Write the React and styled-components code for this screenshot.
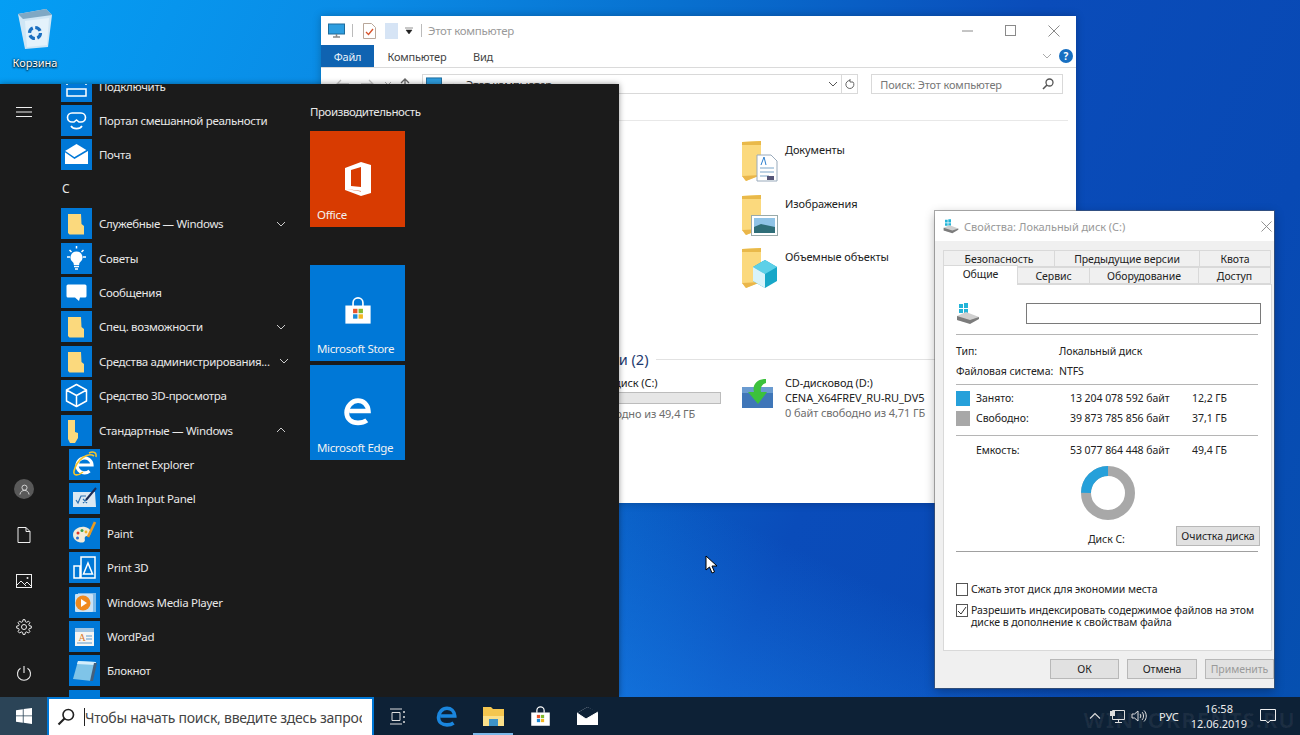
import React from 'react';
import styled, { createGlobalStyle } from 'styled-components';

const Global = createGlobalStyle`
  html, body { margin: 0; padding: 0; width: 1300px; height: 735px; overflow: hidden; }
  body { font-family: "Noto Sans", "Open Sans", "Liberation Sans", sans-serif; font-size: 11.5px; }
  * { box-sizing: border-box; }
  svg { flex: none; }
`;

const Screen = styled.div`
  position: relative; width: 1300px; height: 735px; overflow: hidden;
  display: flex; flex-direction: column;
`;
const Desktop = styled.div`
  position: relative; flex: 1;
  background:
    linear-gradient(205deg, transparent 60%, rgba(25,135,240,.55) 78%, rgba(25,135,240,.2) 92%, transparent 100%),
    linear-gradient(115deg, #049ef4 0%, #0a8ce6 22%, #0870cf 42%, #0a4cba 64%, #0849b4 85%, #0650b0 100%);
`;
const DesktopIcon = styled.div`
  position: absolute; left: 5px; top: 7px; width: 60px;
  display: flex; flex-direction: column; align-items: center; gap: 4px;
  color: #fff; font-size: 11px; text-shadow: 0 1px 2px #000, 0 0 2px #000;
`;

/* ---------- Start menu ---------- */
const StartMenu = styled.div`
  position: absolute; left: 0; top: 84px; width: 619px; height: 613px; z-index: 5;
  background: #1b1b1b; color: #e8e8e8; display: flex; box-shadow: 0 0 6px rgba(0,0,0,.4);
`;
const Rail = styled.div`
  width: 48px; flex: none; display: flex; flex-direction: column; align-items: center;
  padding: 23px 0 1px; color: #eee;
`;
const RailBottom = styled.div`
  margin-top: auto; display: flex; flex-direction: column; align-items: center;
`;
const RailItem = styled.div`
  height: 46px; display: flex; align-items: center; justify-content: center;
`;
const Avatar = styled.div`
  width: 20px; height: 20px; border-radius: 50%; background: #595959;
  display: flex; align-items: center; justify-content: center;
`;
const AppList = styled.div`
  width: 241px; flex: none; padding-left: 13px; overflow: hidden; height: 613px;
`;
const AppInner = styled.div`
  margin-top: -15px; display: flex; flex-direction: column;
`;
const AppRow = styled.div`
  height: 34.4px; flex: none; display: flex; align-items: center; gap: 7px;
  padding-left: ${p => (p.$nested ? '8px' : '0')}; white-space: nowrap;
`;
const AppTile = styled.div`
  width: 31px; height: 31px; flex: none; background: #0078d7; display: flex;
  align-items: center; justify-content: center;
`;
const AppName = styled.span`
  flex: 1; line-height: 31px; letter-spacing: -.32px;
`;
const Chevron = styled.span`
  flex: none; width: 15px; margin-right: .5px; display: flex; justify-content: center; color: #ccc;
`;
const GroupLetter = styled.div`
  height: 34.4px; padding-left: 1px; flex: none; font-size: 12px; line-height: 34.4px;
`;
const TileArea = styled.div`
  padding: 19px 0 0 21px; display: flex; flex-direction: column;
`;
const TileTitle = styled.div`
  height: 28px; font-size: 11.5px; line-height: 18px; white-space: nowrap; letter-spacing: -.42px;
`;
const Tile = styled.div`
  position: relative; width: 95px; height: ${p => p.$h || 96}px; margin-bottom: ${p => p.$mb || 0}px;
  background: ${p => p.$bg}; display: flex; flex-direction: column; align-items: center;
  padding-top: ${p => p.$pt || 28}px;
`;
const TileLabel = styled.span`
  position: absolute; left: 7px; bottom: 5px; font-size: 11.5px; line-height: 15px; color: #f2f2f2; white-space: nowrap; letter-spacing: -.35px;
`;

/* ---------- Explorer ---------- */
const Explorer = styled.div`
  position: absolute; left: 321px; top: 16px; width: 755px; height: 487px; background: #fff; color: #333;
  display: flex; flex-direction: column; box-shadow: 0 0 8px rgba(0,0,0,.25);
`;
const ExTitle = styled.div`
  height: 29px; flex: none; display: flex; align-items: center; padding-left: 7px;
`;
const QuickSep = styled.span`
  width: 1px; height: 13px; background: ${p => (p.$clear ? 'transparent' : '#bbb')};
  margin: 0 ${p => p.$r ?? 10}px 0 ${p => p.$l ?? 7}px;
`;
const ExTitleText = styled.span` color: #9a9a9a; font-size: 11.5px; letter-spacing: -.3px; margin-left: -3px; `;
const WinButtons = styled.div`
  margin-left: auto; display: flex; align-items: center; gap: 32px; padding-right: 16px; color: #8a8a8a;
`;
const Ribbon = styled.div`
  height: 23px; flex: none; display: flex; align-items: stretch; border-bottom: 1px solid #dadada;
`;
const RibbonTab = styled.div`
  width: ${p => p.$w}px; display: flex; align-items: center; justify-content: center; font-size: 11px; letter-spacing: -.2px;
  color: ${p => (p.$active ? '#eaf3fb' : '#444')}; background: ${p => (p.$active ? '#0f63b1' : 'transparent')};
`;
const RibbonEnd = styled.div`
  margin-left: auto; display: flex; align-items: center; gap: 7px; padding-right: 3px; color: #aaa;
`;
const HelpDot = styled.span`
  width: 14px; height: 14px; border-radius: 50%; background: #176fc1; color: #fff; font-size: 10px; font-weight: 700;
  display: flex; align-items: center; justify-content: center;
`;
const AddressRow = styled.div`
  height: 35px; flex: none; display: flex; align-items: flex-start; padding: 6px 13px 0 10px; position: relative;
`;
const NavArrows = styled.div`
  width: 91px; height: 20px; flex: none; display: flex; align-items: center; color: #bbb;
`;
const AddressBox = styled.div`
  width: 421px; height: 20px; border: 1px solid #d9d9d9; display: flex; align-items: center; padding: 0 3px 0 3px; gap: 4px;
`;
const CrumbArrow = styled.span` color: #888; font-size: 9px; width: 16px; text-align: center; `;
const AddressText = styled.span` flex: 1; letter-spacing: -.3px; `;
const RefreshBox = styled.div`
  width: 16px; height: 20px; border: 1px solid #d9d9d9; border-left: 0; display: flex; align-items: center; justify-content: center; color: #666;
`;
const SearchBox = styled.div`
  margin-left: 13px; width: 192px; height: 20px; border: 1px solid #d9d9d9; padding: 0 8px; display: flex; align-items: center;
  justify-content: space-between; color: #777; font-size: 11px; letter-spacing: -.15px;
`;
const ExBody = styled.div`
  flex: 1; display: flex; flex-direction: column; padding: 17px 8px 0 170px;
`;
const BodyRule = styled.div` height: 1px; background: #e8e8e8; `;
const FolderList = styled.div`
  margin: 19px 0 0 250px; display: flex; flex-direction: column; gap: 13.5px;
`;
const FolderRow = styled.div`
  height: 40px; display: flex; gap: 7px; font-size: 11px; line-height: 20px; color: #222; letter-spacing: -.1px;
`;
const SectionHead = styled.div`
  margin-top: 62px; display: flex; align-items: center; gap: 8px; color: #1e3a6e; font-size: 14.5px; line-height: 20px; white-space: nowrap;
`;
const SectionLine = styled.span` flex: 1; height: 1px; background: #e2e2e2; `;
const Drives = styled.div` margin-top: 6px; display: flex; gap: 20px; `;
const DriveTile = styled.div` width: 230px; display: flex; gap: 7px; `;
const DriveText = styled.div`
  flex: 1; font-size: 11px; line-height: 15px; color: #222; white-space: nowrap; display: flex; flex-direction: column; letter-spacing: -.1px;
`;
const DriveBar = styled.div` height: 12px; border: 1px solid #bcbcbc; background: #e6e6e6; margin: 2px 0 2px; `;
const DriveFree = styled.span` color: #6d6d6d; `;
const CdIconWrap = styled.div` width: 37px; padding-top: 3px; `;
const OverlayBox = styled.div`
  position: relative; width: 37px; height: 42px; flex: none;
  & > svg:nth-child(2) { position: absolute; right: 0; bottom: 0; }
`;

/* ---------- Properties dialog ---------- */
const Dialog = styled.div`
  position: absolute; left: 935px; top: 211px; width: 339px; height: 477px; z-index: 6; background: #f0f0f0;
  color: #222; display: flex; flex-direction: column; box-shadow: 0 0 0 1px rgba(90,90,90,.5), 0 3px 10px rgba(0,0,0,.3); font-size: 10.5px; letter-spacing: -.05px;
`;
const DlgTitle = styled.div`
  height: 30px; flex: none; background: #fff; display: flex; align-items: center; padding: 0 2px 0 8px; gap: 5px;
  color: #999; font-size: 11px;
`;
const DlgClose = styled.span` margin-left: auto; color: #888; display: flex; `;
const TabsWrap = styled.div` margin: 9px 3px 0 8px; display: flex; flex-direction: column; `;
const TabRow = styled.div` display: flex; height: 17px; `;
const Tab = styled.div`
  position: relative; width: ${p => p.$w}px; display: flex; align-items: center; justify-content: center;
  background: ${p => (p.$on ? '#fff' : '#f0f0f0')}; border: 1px solid #d9d9d9; border-bottom: ${p => (p.$on ? '0' : '1px solid #d9d9d9')};
  border-left-width: ${p => (p.$first ? 1 : 0)}px; z-index: ${p => (p.$on ? 2 : 1)};
  ${p => p.$on && 'margin-top:-2px; height:20px; padding-bottom:3px;'}
`;
const Panel = styled.div`
  margin: 0 2px 0 8px; height: 367px; background: #fff; border: 1px solid #d9d9d9; padding: 18px 13px 0 12px;
  display: flex; flex-direction: column;
`;
const NameRow = styled.div` display: flex; align-items: center; justify-content: space-between; height: 21px; `;
const NameInput = styled.div` width: 235px; height: 21px; border: 1px solid #7a7a7a; margin-right: -3px; `;
const Rule = styled.div` height: 1px; flex: none; background: ${p => (p.$dark ? '#a0a0a0' : '#b5b5b5')}; margin-top: ${p => p.$mt}px; margin-bottom: ${p => p.$mb}px; `;
const InfoRow = styled.div` height: 20px; flex: none; display: grid; grid-template-columns: 103px 1fr; align-items: center; white-space: nowrap; `;
const UsageRow = styled.div` height: 20px; flex: none; display: grid; grid-template-columns: 20px 94px 122px 1fr; align-items: center; white-space: nowrap; `;
const Swatch = styled.span` width: 14px; height: 15px; background: ${p => p.$c}; `;
const DonutWrap = styled.div` display: flex; justify-content: center; margin: 6px 0 0 2px; `;
const DiskRow = styled.div` display: flex; align-items: flex-end; padding-left: 132px; margin-top: 6px; `;
const DiskLabel = styled.span` line-height: 14px; `;
const Btn = styled.div`
  width: ${p => p.$w}px; height: 20px; background: #e1e1e1; border: 1px solid #b8b8b8; display: flex; align-items: center; justify-content: center;
  color: ${p => (p.$off ? '#9a9a9a' : '#222')}; white-space: nowrap;
`;
const CleanBtn = styled(Btn)` margin-left: auto; margin-right: -2px; `;
const CheckRow = styled.div` display: flex; gap: 3px; margin-top: ${p => p.$mt}px; line-height: 12px; `;
const Check = styled.span`
  width: 12px; height: 13px; flex: none; border: 1px solid #555; background: #fff; display: flex; align-items: center; justify-content: center;
`;
const DlgFooter = styled.div` display: flex; justify-content: flex-end; gap: 8px; padding: 8px 0 0 0; `;

/* ---------- Taskbar ---------- */
const Taskbar = styled.div`
  position: relative; z-index: 7; height: 38px; flex: none; background: #0d2136; display: flex; align-items: stretch; color: #eee;
`;
const StartBtn = styled.div`
  width: 47px; flex: none; background: #2b4457; display: flex; align-items: center; justify-content: center;
`;
const SearchBar = styled.div`
  width: 327px; flex: none; background: #fff; border: 2px solid #0078d7; border-bottom: 0; display: flex; align-items: center;
  padding: 0 10px 0 8px; color: #444; overflow: hidden; white-space: nowrap;
`;
const Caret = styled.span` width: 1px; height: 18px; background: #222; margin-left: 9px; flex: none; `;
const SearchText = styled.span` font-size: 14px; overflow: hidden; letter-spacing: -.25px; `;
const TaskIcons = styled.div` display: flex; align-items: stretch; margin-left: 7px; `;
const TaskItem = styled.div`
  position: relative; width: ${p => p.$w || 46}px; margin-left: ${p => p.$ml || 0}px; display: flex; align-items: center; justify-content: center;
  ${p => p.$active && `&::after{content:"";position:absolute;left:3px;right:3px;bottom:0;height:2px;background:#7cb8e8;}`}
`;
const Tray = styled.div`
  margin-left: auto; position: relative; display: flex; align-items: center; gap: 5px; padding-right: 24px; color: #ddd;
`;
const TrayUpWrap = styled.span` display: flex; margin-right: 4px; `;
const TrayLang = styled.span` font-size: 11px; margin: 0 7px; color: #eee; `;
const Clock = styled.div` text-align: center; font-size: 11px; line-height: 15px; color: #eee; margin-right: 8px; `;
const Watermark = styled.span`
  position: absolute; right: 4px; top: 7px; font-size: 22px; font-weight: 700; color: rgba(255,255,255,.06); white-space: nowrap; letter-spacing: 1px;
`;
const Cursor = styled.div` position: absolute; left: 705px; top: 555px; z-index: 8; display: flex; `;

/* ---------- Icons ---------- */
const Y = '#fbd97d';
const I = ({ children, s = 31, vb = '0 0 31 31', w, h }) => (
  <svg width={w || s} height={h || s} viewBox={vb} fill="none">{children}</svg>
);
const RecycleBin = () => (
  <I w={40} h={44} vb="0 0 40 44">
    <path d="M3 7 L31 2 L37 8 L33 40 L10 42Z" fill="#cfe6f5" />
    <path d="M3 7 L31 2 L37 8 L8 12Z" fill="#7fa8c4" />
    <path d="M10 14 L34 11 L32 38 L12 40Z" fill="#e4f2fb" />
    <circle cx="20" cy="26" r="5.5" stroke="#1c6fc0" strokeWidth="3.2" strokeDasharray="6 2.5" />
  </I>
);
const PartialConnect = () => (<I><path d="M6 14v-6h6M25 14v-6h-6M6 18h19v7H6z" stroke="#fff" strokeWidth="1.5" /></I>);
const Goggles = () => (<I><path d="M11 8h9a4.500 4.500 0 0 1 0 9h-2l-2.500-2-2.500 2h-2a4.500 4.500 0 0 1 0-9z" stroke="#fff" strokeWidth="1.600" /><path d="M10 21c2 3.500 9 3.500 11 0" stroke="#fff" strokeWidth="1.600" /></I>);
const Mail = ({ flap = '#0078d7' }) => (<I><path d="M4 12 15.500 5 27 12v13H4z" fill="#fff" /><path d="M4 12.500 13.500 19 27 11" stroke={flap} strokeWidth="1.500" /></I>);
const Folder = ({ narrow }) => (<I><path d={narrow ? 'M7 5h7v12l3 1v5l-3 5H9l-2-4z' : 'M7 6h13l.5 10 2.500 2v8.500H8.500L7 25z'} fill={Y} /></I>);
const Bulb = () => (<I><path d="M15.500 8.500a6 6 0 0 1 3.600 10.800c-.8.700-.9 1.600-.9 2.700h-5.400c0-1.100-.1-2-.9-2.700A6 6 0 0 1 15.500 8.500z" fill="#fff" /><path d="M13 23.500h5M14 26h3" stroke="#fff" strokeWidth="1.500" /><path d="M15.500 3v2.500M6 14h3M22 14h3M8.500 7l2 2M22.500 7l-2 2" stroke="#fff" strokeWidth="1.500" /></I>);
const Chat = () => (<I><path d="M7 7.500h17a1.500 1.500 0 0 1 1.500 1.500v10a1.500 1.500 0 0 1-1.500 1.500h-5l-1 3.500-4-3.500H7A1.500 1.500 0 0 1 5.500 19V9A1.500 1.500 0 0 1 7 7.500z" fill="#fff" /></I>);
const Cube = () => (<I><path d="M15.500 4.500 25.500 10v11l-10 5.500-10-5.500V10zM5.500 10l10 5.500 10-5.500M15.500 15.500v11" stroke="#fff" strokeWidth="1.500" strokeLinejoin="round" /></I>);
const IE = () => (<I>
  <path d="M9 16h14a7.500 7.500 0 1 0-2.500 6" stroke="#fff" strokeWidth="3.200" />
  <path d="M25 7C19 3 8 10 5 22c-1 5 4 5 9 1" stroke="#f6c42c" strokeWidth="1.600" />
  <path d="M20 4c4-2 8-1 7 4" stroke="#f6c42c" strokeWidth="1.400" />
</I>);
const MathIcon = () => (<I><path d="M4 9h22l1 15H4z" fill="#dbe8f2" /><path d="M7 17l2 3 3-7h5M14 16l4 4M18 16l-4 4" stroke="#2a6fb0" strokeWidth="1.200" /><path d="M17 17 27 5" stroke="#1a2a55" strokeWidth="2" /></I>);
const PaintI = () => (<I>
  <path d="M4 17c0-6 7-9 12-8 5 .8 7 5 5 8-1.500 2-4 0-5 2-1 2 1 3-1 5-3 2-11-1-11-7z" fill="#f1ead8" />
  <circle cx="9" cy="15" r="1.500" fill="#d9362b" /><circle cx="13" cy="12.500" r="1.500" fill="#3ba14a" /><circle cx="8.500" cy="20" r="1.500" fill="#2b6fd1" /><circle cx="17" cy="14" r="1.400" fill="#f0b323" />
  <path d="M26 4 19 19" stroke="#e89a22" strokeWidth="2.600" />
</I>);
const Print3D = () => (<I><path d="M12 5h14v21H12zM5 14h6v12H5z" stroke="#fff" strokeWidth="1.500" /><path d="M19 11l4.500 11h-9z" stroke="#fff" strokeWidth="1.500" /></I>);
const WMP = () => (<I><rect x="9" y="6" width="18" height="19" fill="#7fbbe9" /><rect x="6" y="7" width="18" height="18" rx="1" fill="#c9e2f5" /><circle cx="14" cy="16" r="7.500" fill="#f08a1d" /><path d="M12 12l6 4-6 4z" fill="#fff" /></I>);
const WordPadI = () => (<I><path d="M6 7h19v18H6z" fill="#f5f5f2" /><path d="M6 7h19v4H6z" fill="#9fc6e6" /><text x="9.500" y="20" fontSize="10" fill="#d97a2b" fontFamily="Liberation Serif, serif">A</text><path d="M17 15h6M17 18h6M8 22h15" stroke="#5b9bd0" /></I>);
const Notepad = () => (<I><path d="M9 6 27 7 23 26 4 24z" fill="#7fc4e8" /><path d="M9 6 27 7 26 10 8 9z" fill="#d4eefc" /><path d="M25 8l-4 18 3 0 4-18z" fill="#44607d" /></I>);
const OfficeLogo = () => (<I w={32} h={36} vb="0 0 32 36"><path fillRule="evenodd" d="M19 1 3 7v22l16 6 10-3V4zM19 6 9 9v16l10 1 0 4.500L4.500 28l14.500 2zm0 0v24" fill="#fff" /></I>);
const Store = ({ s = 31 }) => (<I s={s}>
  <path d="M11 11V8a4.500 4.500 0 0 1 9 0v3" stroke="#fff" strokeWidth="1.500" />
  <path d="M4 10.500h23V27H4z" fill="#fff" />
  <rect x="11" y="13.500" width="4" height="4" fill="#e8552b" /><rect x="16" y="13.500" width="4" height="4" fill="#7fb92b" />
  <rect x="11" y="18.500" width="4" height="4" fill="#1a8ad8" /><rect x="16" y="18.500" width="4" height="4" fill="#f3b61f" />
</I>);
const EdgeLogo = ({ c = '#fff', s = 31 }) => (<I s={s}><path d="M7 15.500h18.500C25 9 20.500 5.500 15.500 5.500 9.500 5.500 4.500 11 4.500 17c0 6.500 5 10 11 10 3.500 0 6.500-1 8.500-2.500" stroke={c} strokeWidth="4.600" /></I>);
const ExFolder = () => (<I w={38} h={42} vb="0 0 38 42"><path d="M1 2l19-1v34L5 41 1 36z" fill={Y} /><path d="M1 2l19-1v4H1z" fill="#e9b94a" /><path d="M1 36l19-1-15 6z" fill="#eab64a" /></I>);
const DocOver = () => (<I w={22} h={28} vb="0 0 22 28"><path d="M1 1h14l6 6v20H1z" fill="#fff" stroke="#9ab" /><path d="M4 14h14M4 18h14M4 22h9" stroke="#7aa5c8" /><path d="M11 22h7v4h-7z" fill="#557" /><path d="M5 11l3-8 2 8" stroke="#2c7fce" /></I>);
const PicOver = () => (<I w={27} h={21} vb="0 0 27 21"><rect x=".5" y=".5" width="26" height="20" fill="#fff" stroke="#9aa" /><rect x="3" y="3" width="21" height="15" fill="#8fc3e6" /><path d="M3 12l7-3 14 3v6H3z" fill="#2f6e78" /></I>);
const CubeOver = () => (<I w={26} h={30} vb="0 0 26 30"><path d="M13 1 25 8v14l-12 7-12-7V8z" fill="#17a7c8" /><path d="M13 1 25 8 13 15 1 8z" fill="#5cd0e8" /><path d="M1 8l12 7v14L1 22z" fill="#d8f3fa" /></I>);
const DocFolder = ({ children }) => (<OverlayBox><ExFolder />{children}</OverlayBox>);
const Drive = () => (<I w={54} h={30} vb="0 0 54 30"><rect x="1" y="3" width="50" height="24" fill="#d8d8d8" /></I>);
const CdIcon = () => (<I w={33} h={31} vb="0 0 33 31">
  <path d="M1 9h31v21H1z" fill="#3f76b8" /><path d="M1 9h31v6H1z" fill="#6a9bd0" />
  <path d="M25 1C16 1 11 7 13 14H7l10 12 9-12h-6c-1-4 1-8 5-9z" fill="#3cc13c" />
</I>);
const DiskIcon = ({ w = 24, h = 22 }) => (<I w={w} h={h} vb="0 0 24 22">
  <path d="M3 1h4v4H3zM8 0h4v5H8zM3 6h4v4H3zM8 6h4v4H8z" fill="#22b4d8" />
  <path d="M1 13 10 9l13 5-9 6-13-3z" fill="#cfcfcf" /><path d="M1 13l13 4 9-3v2l-9 5-13-4z" fill="#7c7c7c" />
</I>);
const Computer = ({ w = 17, h = 16 }) => (<I w={w} h={h} vb="0 0 17 16"><rect x=".5" y="1" width="16" height="10" fill="#2e9ee0" stroke="#1d6b9b" /><path d="M5 14h7M8.500 11v3" stroke="#888" strokeWidth="1.500" /></I>);
const DocCheck = () => (<I w={13} h={16} vb="0 0 13 16"><path d="M.5.5h8l4 4v11H.5z" fill="#fff" stroke="#b9a79a" /><path d="M3 9l2.500 2.500L10 6" stroke="#d8532b" strokeWidth="1.300" /></I>);
const BlankDoc = () => (<I w={13} h={16} vb="0 0 13 16"><rect width="13" height="16" fill="#d6e4f5" /></I>);
const QuickDrop = () => (<I w={8} h={8} vb="0 0 8 8"><path d="M0 1h8M1 3h6l-3 4z" fill="#222" stroke="#222" strokeWidth=".5" /></I>);
const MinIcon = () => (<I s={11} vb="0 0 11 11"><path d="M0 6h11" stroke="currentColor" /></I>);
const MaxIcon = () => (<I s={11} vb="0 0 11 11"><rect x=".5" y=".5" width="10" height="10" stroke="currentColor" /></I>);
const Refresh = () => (<I s={11} vb="0 0 11 11"><path d="M9 3a4 4 0 1 1-3-1.500M6 0v3h3" stroke="#666" /></I>);
const Nav = () => (<I w={90} h={20} vb="0 0 90 20"><path d="M6 10h12M10 6l-4 4 4 4M30 10h12M38 6l4 4-4 4" stroke="#c4c4c4" strokeWidth="1.300" /><path d="M54 8l3 3 3-3" stroke="#aaa" /><path d="M74 16V5M70 9l4-4 4 4" stroke="#666" strokeWidth="1.300" /></I>);
const Down = ({ s = 10, c = 'currentColor', up }) => (<I s={s} vb="0 0 10 10"><path d={up ? 'M1 7l4-4 4 4' : 'M1 3l4 4 4-4'} stroke={c} /></I>);
const XIcon = ({ s = 12 }) => (<I s={s} vb="0 0 12 12"><path d="M.5.5l11 11M11.500.5l-11 11" stroke="currentColor" /></I>);
const Glass = ({ s = 12, c = '#555', sw = 1.300 }) => (<I s={s} vb="0 0 12 12"><circle cx="7.500" cy="4.500" r="3.500" stroke={c} strokeWidth={sw} /><path d="M5 7l-4 4" stroke={c} strokeWidth={sw + .3} /></I>);
const Hamburger = () => (<I w={16} h={10} vb="0 0 16 10"><path d="M0 .5h16M0 5h16M0 9.500h16" stroke="#eee" /></I>);
const Doc = () => (<I w={14} h={16} vb="0 0 14 16"><path d="M1 .5h8l4 4v11H1zM9 .5v4h4" stroke="#eee" /></I>);
const Photo = () => (<I w={16} h={14} vb="0 0 16 14"><rect x=".5" y=".5" width="15" height="13" stroke="#eee" /><path d="M1 11l4-4 5 5M9 10l2-2 4 4" stroke="#eee" /><circle cx="11.500" cy="4" r="1" fill="#eee" /></I>);
const Gear = () => (<I s={16} vb="0 0 16 16"><circle cx="8" cy="8" r="2.500" stroke="#eee" /><path d="M7 .7h2l.4 2 1.300.6 1.800-1.100 1.400 1.400-1.100 1.800.5 1.300 2 .4v2l-2 .4-.5 1.300 1.100 1.800-1.400 1.400-1.800-1.100-1.300.5-.4 2H7l-.4-2-1.300-.5-1.800 1.100-1.400-1.400 1.100-1.800-.5-1.300-2-.4v-2l2-.4.5-1.300-1.100-1.800 1.400-1.400 1.800 1.100 1.300-.6z" stroke="#eee" strokeLinejoin="round" /></I>);
const Power = () => (<I s={16} vb="0 0 16 16"><path d="M8 1v7M4.500 3.300a6.500 6.500 0 1 0 7 0" stroke="#eee" strokeWidth="1.100" /></I>);
const User = () => (<I s={11} vb="0 0 12 12"><circle cx="6" cy="4" r="2.800" stroke="#ddd" /><path d="M1 11.500c.5-3 2.500-4.500 5-4.500s4.500 1.500 5 4.500" stroke="#ddd" /></I>);
const WinLogo = () => (<I s={16} vb="0 0 16 16"><path d="M0 2.200 6.800 1.200v6.300H0zM7.600 1.100 16 0v7.500H7.600zM0 8.300h6.800v6.400L0 13.800zM7.600 8.300H16V16l-8.400-1.200z" fill="#fff" /></I>);
const TaskView = () => (<I w={17} h={17} vb="0 0 17 17"><path d="M1 1h12M1 16h12M3 4.500h8v8H3z" stroke="#ddd" /><path d="M15 3v2M15 8v2M15 13v2" stroke="#ddd" strokeWidth="1.500" /></I>);
const TbFolder = () => (<I w={23} h={22} vb="0 0 23 22"><path d="M1 2h8l2 2h11v17H1z" fill="#f4c64f" /><path d="M1 11h21v10H1z" fill="#fbe08a" /><path d="M7 14h9v7H7z" fill="#3d93c9" /></I>);
const TbMail = () => (<I w={23} h={20} vb="0 0 23 20"><path d="M1 7 11.500 1 22 7v12H1z" fill="#fff" /><path d="M1 7l9 6L22 6 11.500 1z" fill="#0d2136" /><path d="M1 7l9 6L22 6" stroke="#fff" /></I>);
const TrayUp = () => (<I s={12} vb="0 0 12 12"><path d="M1 8.500 6 3.500l5 5" stroke="#ddd" strokeWidth="1.100" /></I>);
const Net = () => (<I w={16} h={15} vb="0 0 16 15"><path d="M2.500 1.500h12v9h-12zM5 13.500h7M8.500 10.500v3" stroke="#ddd" /><rect x="0" y="2" width="5" height="5" fill="#ddd" /></I>);
const Speaker = () => (<I w={16} h={14} vb="0 0 16 14"><path d="M1 5h2.500L7 2v10L3.500 9H1zM9 5c1 1 1 3 0 4M11 3c2 2 2 6 0 8M13 1.500c3 3 3 8 0 11" stroke="#ddd" /></I>);
const Notif = () => (<I w={16} h={15} vb="0 0 16 15"><path d="M.5.5h15v11h-5.500L8 14l-2-2.500H.5z" stroke="#eee" /></I>);
const Arrow = () => (<I w={13} h={19} vb="0 0 13 19"><path d="M1 1v14l3.500-3 2.500 6 2.500-1-2.500-6H12z" fill="#fff" stroke="#000" /></I>);
const Ck = () => (<I s={10} vb="0 0 10 10"><path d="M1 5l3 3 5-7" stroke="#333" /></I>);
const Donut = () => (
  <I s={54} vb="0 0 54 54">
    <circle cx="27" cy="27" r="22" stroke="#a8a8a8" strokeWidth="10" />
    <circle cx="27" cy="27" r="22" stroke="#26a0da" strokeWidth="10" strokeDasharray="34.200 104" transform="rotate(-90 27 27) scale(1 -1) translate(0 -54)" />
  </I>
);

const apps = [
  { n: 'Подключить', i: <PartialConnect /> },
  { n: 'Портал смешанной реальности', i: <Goggles /> },
  { n: 'Почта', i: <Mail /> },
  { letter: 'С' },
  { n: 'Служебные — Windows', i: <Folder />, c: 'd' },
  { n: 'Советы', i: <Bulb /> },
  { n: 'Сообщения', i: <Chat /> },
  { n: 'Спец. возможности', i: <Folder />, c: 'd' },
  { n: 'Средства администрирования...', i: <Folder />, c: 'd' },
  { n: 'Средство 3D-просмотра', i: <Cube /> },
  { n: 'Стандартные — Windows', i: <Folder narrow />, c: 'u' },
  { n: 'Internet Explorer', i: <IE />, sub: 1 },
  { n: 'Math Input Panel', i: <MathIcon />, sub: 1 },
  { n: 'Paint', i: <PaintI />, sub: 1 },
  { n: 'Print 3D', i: <Print3D />, sub: 1 },
  { n: 'Windows Media Player', i: <WMP />, sub: 1 },
  { n: 'WordPad', i: <WordPadI />, sub: 1 },
  { n: 'Блокнот', i: <Notepad />, sub: 1 },
  { n: '', i: null, sub: 1 },
];

export default function App() {
  return (
    <Screen>
      <Global />
      <Desktop>
        <DesktopIcon><RecycleBin /><span>Корзина</span></DesktopIcon>

        <Explorer>
          <ExTitle>
            <Computer /><QuickSep />
            <DocCheck />
            <QuickSep $clear $l={4} $r={4} />
            <BlankDoc />
            <QuickSep $clear $l={3} $r={3} />
            <QuickDrop />
            <QuickSep $l={8} $r={9} />
            <ExTitleText>Этот компьютер</ExTitleText>
            <WinButtons>
              <MinIcon />
              <MaxIcon />
              <XIcon />
            </WinButtons>
          </ExTitle>
          <Ribbon>
            <RibbonTab $active $w={53}>Файл</RibbonTab>
            <RibbonTab $w={86}>Компьютер</RibbonTab>
            <RibbonTab $w={46}>Вид</RibbonTab>
            <RibbonEnd><Down /><HelpDot>?</HelpDot></RibbonEnd>
          </Ribbon>
          <AddressRow>
            <NavArrows><Nav /></NavArrows>
            <AddressBox>
              <Computer w={16} h={15} />
              <CrumbArrow>›</CrumbArrow>
              <AddressText>Этот компьютер</AddressText>
              <Down c="#555" />
            </AddressBox>
            <RefreshBox><Refresh /></RefreshBox>
            <SearchBox>Поиск: Этот компьютер <Glass /></SearchBox>
          </AddressRow>
          <ExBody>
            <BodyRule />
            <FolderList>
              <FolderRow><DocFolder><DocOver /></DocFolder>Документы</FolderRow>
              <FolderRow><DocFolder><PicOver /></DocFolder>Изображения</FolderRow>
              <FolderRow><DocFolder><CubeOver /></DocFolder>Объемные объекты</FolderRow>
            </FolderList>
            <SectionHead>Устройства и диски (2)<SectionLine /></SectionHead>
            <Drives>
              <DriveTile>
                <Drive />
                <DriveText>
                  <span>Локальный диск (C:)</span>
                  <DriveBar />
                  <DriveFree>37,1 ГБ свободно из 49,4 ГБ</DriveFree>
                </DriveText>
              </DriveTile>
              <DriveTile>
                <CdIconWrap><CdIcon /></CdIconWrap>
                <DriveText>
                  <span>CD-дисковод (D:)</span>
                  <span>CENA_X64FREV_RU-RU_DV5</span>
                  <DriveFree>0 байт свободно из 4,71 ГБ</DriveFree>
                </DriveText>
              </DriveTile>
            </Drives>
          </ExBody>
        </Explorer>

        <StartMenu>
          <Rail>
            <Hamburger />
            <RailBottom>
              <RailItem><Avatar><User /></Avatar></RailItem>
              <RailItem><Doc /></RailItem>
              <RailItem><Photo /></RailItem>
              <RailItem><Gear /></RailItem>
              <RailItem><Power /></RailItem>
            </RailBottom>
          </Rail>
          <AppList>
            <AppInner>
              {apps.map((a, k) => a.letter ? (
                <GroupLetter key={k}>{a.letter}</GroupLetter>
              ) : (
                <AppRow key={k} $nested={a.sub}>
                  <AppTile>{a.i}</AppTile>
                  <AppName>{a.n}</AppName>
                  {a.c && <Chevron><Down c="#ccc" up={a.c === 'u'} /></Chevron>}
                </AppRow>
              ))}
            </AppInner>
          </AppList>
          <TileArea>
            <TileTitle>Производительность</TileTitle>
            <Tile $bg="#d83b01" $mb={38} $pt={30}><OfficeLogo /><TileLabel>Office</TileLabel></Tile>
            <Tile $bg="#0078d7" $mb={4} $pt={29}><Store s={34} /><TileLabel>Microsoft Store</TileLabel></Tile>
            <Tile $bg="#0078d7" $h={95} $pt={30}><EdgeLogo s={32} /><TileLabel>Microsoft Edge</TileLabel></Tile>
          </TileArea>
        </StartMenu>

        <Dialog>
          <DlgTitle>
            <DiskIcon w={16} h={15} />
            Свойства: Локальный диск (C:)
            <DlgClose><XIcon s={11} /></DlgClose>
          </DlgTitle>
          <TabsWrap>
            <TabRow>
              <Tab $first $w={112}>Безопасность</Tab>
              <Tab $w={145}>Предыдущие версии</Tab>
              <Tab $w={71}>Квота</Tab>
            </TabRow>
            <TabRow>
              <Tab $first $on $w={75}>Общие</Tab>
              <Tab $w={72}>Сервис</Tab>
              <Tab $w={109}>Оборудование</Tab>
              <Tab $w={72}>Доступ</Tab>
            </TabRow>
          </TabsWrap>
          <Panel>
            <NameRow><DiskIcon /><NameInput /></NameRow>
            <Rule $mt={10} $mb={6} />
            <InfoRow><span>Тип:</span><span>Локальный диск</span></InfoRow>
            <InfoRow><span>Файловая система:</span><span>NTFS</span></InfoRow>
            <Rule $mt={3} $mb={3} />
            <UsageRow><Swatch $c="#26a0da" /><span>Занято:</span><span>13 204 078 592 байт</span><span>12,2 ГБ</span></UsageRow>
            <UsageRow><Swatch $c="#a8a8a8" /><span>Свободно:</span><span>39 873 785 856 байт</span><span>37,1 ГБ</span></UsageRow>
            <Rule $mt={7} $mb={4} />
            <UsageRow><span /><span>Емкость:</span><span>53 077 864 448 байт</span><span>49,4 ГБ</span></UsageRow>
            <DonutWrap><Donut /></DonutWrap>
            <DiskRow>
              <DiskLabel>Диск C:</DiskLabel>
              <CleanBtn $w={84}>Очистка диска</CleanBtn>
            </DiskRow>
            <Rule $dark $mt={5} $mb={0} />
            <CheckRow $mt={31}><Check />Сжать этот диск для экономии места</CheckRow>
            <CheckRow $mt={8}><Check><Ck /></Check><span>Разрешить индексировать содержимое файлов на этом<br />диске в дополнение к свойствам файла</span></CheckRow>
          </Panel>
          <DlgFooter>
            <Btn $w={69}>ОК</Btn>
            <Btn $w={70}>Отмена</Btn>
            <Btn $w={69} $off>Применить</Btn>
          </DlgFooter>
        </Dialog>

        <Cursor><Arrow /></Cursor>
      </Desktop>

      <Taskbar>
        <StartBtn><WinLogo /></StartBtn>
        <SearchBar>
          <Glass s={18} c="#222" sw={1.100} />
          <Caret />
          <SearchText>Чтобы начать поиск, введите здесь запрос</SearchText>
        </SearchBar>
        <TaskIcons>
          <TaskItem $w={32}><TaskView /></TaskItem>
          <TaskItem $w={47} $ml={10}><EdgeLogo s={24} c="#1a86de" /></TaskItem>
          <TaskItem $active $w={46}><TbFolder /></TaskItem>
          <TaskItem $w={48}><Store s={25} /></TaskItem>
          <TaskItem $w={47}><TbMail /></TaskItem>
        </TaskIcons>
        <Tray>
          <Watermark>WINTORRENTS.RU</Watermark>
          <TrayUpWrap><TrayUp /></TrayUpWrap><Net /><Speaker />
          <TrayLang>РУС</TrayLang>
          <Clock>16:58<br />12.06.2019</Clock>
          <Notif />
        </Tray>
      </Taskbar>
    </Screen>
  );
}
